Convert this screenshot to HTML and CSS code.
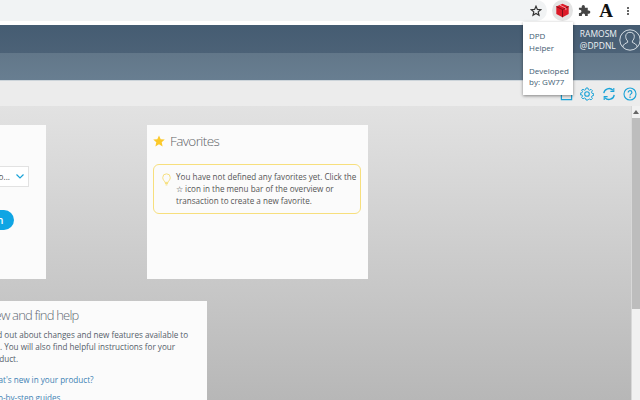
FILE: index.html
```html
<!DOCTYPE html>
<html lang="en">
<head>
<meta charset="utf-8">
<title>DPD Helper</title>
<link rel="stylesheet" href="styles.css">
</head>
<body>
<div class="chrome">
  <div class="omnibox"><svg class="star-o" viewBox="0 0 12 12" width="12" height="12"><path d="M6 1.200l1.400 3.200 3.400.3-2.600 2.200.8 3.400L6 8.500l-3 1.800.8-3.400L1.200 4.700l3.400-.3z" fill="none" stroke="#333" stroke-width="1.200"/></svg></div>
  <span class="ext-active"><svg viewBox="0 0 16 16" width="15" height="15"><path d="M8 .8l6.600 3v7.900L8 15.200 1.400 11.700V3.800z" fill="#dc1a28"/><path d="M1.400 3.800L8 7l6.600-3.200M8 7v8.200" stroke="#7e0d18" stroke-width="1" fill="none"/><path d="M5 2.200l6.600 3.200v2.200" stroke="#f7a0a5" stroke-width="1" fill="none"/></svg></span>
  <svg class="puzzle" viewBox="0 0 14 14" width="13" height="13"><path d="M1 4h3V2.800a1.700 1.700 0 0 1 3.400 0V4h3.100v3h1.100a1.700 1.700 0 0 1 0 3.400h-1.100V13H7.600v-1.100a1.700 1.700 0 0 0-3.400 0V13H1V9.600h1a1.700 1.700 0 0 0 0-3.400H1z" fill="#444"/></svg>
  <span class="serif-a">A</span>
  <span class="kebab"><i></i><i></i><i></i></span>
</div>
<header class="top">
  <div class="user">
    <div class="user-name">RAMOSM<br>@DPDNL</div>
    <svg viewBox="0 0 22 22" width="22" height="22"><circle cx="11" cy="11" r="10.200" fill="none" stroke="#d5dde3" stroke-width="1"/><path d="M3.800 18c.5-3 2.800-3.600 4.800-4.600v-1.500C7.300 10.800 6.700 9 6.700 7.300 6.700 4.800 8.500 3.300 11 3.300s4.300 1.500 4.300 4c0 1.700-.6 3.500-1.900 4.600v1.500c2 1 4.300 1.600 4.800 4.600" fill="none" stroke="#d5dde3" stroke-width="1"/></svg>
  </div>
</header>
<div class="band"></div>
<div class="tools">
  <svg viewBox="0 0 14 14" width="13" height="13"><path d="M1.500 1v11.500h11V4" fill="none" stroke="#1aa3d8" stroke-width="1.300"/></svg>
  <svg viewBox="0 0 14 14" width="14" height="14"><circle cx="7" cy="7" r="2.300" fill="none" stroke="#1aa3d8" stroke-width="1.100"/><path d="M6 1h2l.3 1.600 1.300.6L11 2.300l1.400 1.400-.9 1.400.6 1.300 1.600.3v1.800l-1.600.3-.6 1.300.9 1.400-1.400 1.400-1.400-.9-1.300.6L8 13H6l-.3-1.400-1.300-.6-1.400.9-1.400-1.400.9-1.400-.6-1.300L.3 7.900V6.100l1.600-.3.600-1.300-.9-1.400L3 2.300l1.400.9 1.300-.6z" fill="none" stroke="#1aa3d8" stroke-width="1"/></svg>
  <svg viewBox="0 0 14 14" width="14" height="14"><path d="M1.800 6.200A5.300 5.300 0 0 1 11 3.300M12.200 7.800A5.300 5.300 0 0 1 3 10.700" fill="none" stroke="#1aa3d8" stroke-width="1.300"/><path d="M11.800 1v3.400H8.400M2.200 13V9.600h3.400" fill="none" stroke="#1aa3d8" stroke-width="1.100"/></svg>
  <svg viewBox="0 0 14 14" width="14" height="14"><circle cx="7" cy="7" r="6" fill="none" stroke="#1aa3d8" stroke-width="1.100"/><path d="M5.200 5.400c0-2.300 3.700-2.300 3.700 0 0 1.500-1.900 1.500-1.900 3M7 9.600v1.300" fill="none" stroke="#1aa3d8" stroke-width="1.200"/></svg>
</div>
<div class="view">
  <main class="main">
    <div class="row">
      <section class="card card-search">
        <div class="select"><span class="select-text">Sel. Portfolio...</span><svg viewBox="0 0 8 5" width="8" height="5"><path d="M.5.500L4 4 7.500.500" fill="none" stroke="#1aa3d8" stroke-width="1.200"/></svg></div>
        <button class="btn">Search</button>
      </section>
      <section class="card card-fav">
        <h2 class="fav-title"><svg viewBox="0 0 12 12" width="12" height="12"><path d="M6 .4l1.700 3.800 4.100.4-3.100 2.700.9 4.100L6 9.300l-3.600 2.100.9-4.100L.2 4.600l4.100-.4z" fill="#fbc92b"/></svg>Favorites</h2>
        <div class="note">
          <svg viewBox="0 0 10 14" width="9" height="13"><path d="M3.200 10.200C3 8.500.8 7.500.8 4.900a4.200 4.200 0 0 1 8.400 0c0 2.600-2.200 3.600-2.400 5.300zM3.300 11.500h3.400M4 13h2" fill="none" stroke="#f6dc72" stroke-width="1"/></svg>
          <p>You have not defined any favorites yet. Click the <span class="inline-star">☆</span> icon in the menu bar of the overview or transaction to create a new favorite.</p>
        </div>
      </section>
    </div>
    <section class="card card-help">
      <h2 class="help-title">New and find help</h2>
      <p class="help-text">Find out about changes and new features available to you. You will also find helpful instructions for your product.</p>
      <a class="help-link">What's new in your product?</a>
      <a class="help-link">Step-by-step guides</a>
    </section>
  </main>
  <div class="scroll"><span class="arrow"></span><span class="thumb"></span></div>
</div>
<div class="popup">DPD<br>Helper<br><br>Developed<br>by: GW77</div>
</body>
</html>
```

FILE: styles.css
```css
* { box-sizing: border-box; }
html, body { margin: 0; height: 400px; overflow: hidden; }
body { width: 640px; display: flex; flex-direction: column; font-family: "Open Sans", sans-serif; color: #4c5760; }
.chrome { height: 25px; flex: none; background: #fff; display: flex; align-items: center; padding: 0 11px 4px 0; }
.omnibox { flex: 1; align-self: stretch; background: #f1f3f4; border-radius: 0 11px 11px 0; display: flex; align-items: center; justify-content: flex-end; padding-right: 5px; margin-right: 5px; }
.star-o { display: block; }
.ext-active { width: 21px; height: 21px; border-radius: 50%; background: #e4e4e4; display: flex; align-items: center; justify-content: center; margin-right: 5px; flex: none; }
.puzzle { margin-right: 8px; flex: none; }
.serif-a { font: bold 19px/19px "Liberation Serif", serif; color: #111; width: 14px; margin-right: 14px; text-align: center; }
.kebab { display: flex; flex-direction: column; gap: 1px; width: 2px; }
.kebab i { display: block; width: 2px; height: 2px; background: #333; border-radius: 50%; }
.top { height: 28px; flex: none; background: linear-gradient(#455c72, #4c6277); display: flex; justify-content: flex-end; color: #eef2f5; }
.user { display: flex; align-items: center; gap: 2px; margin-right: -1px; padding-top: 1px; }
.user-name { font-size: 8.500px; line-height: 12px; }
.band { height: 27px; flex: none; background: linear-gradient(#627789, #687e91); }
.tools { height: 26px; flex: none; background: #ececec; border-top: 1px solid #ccd4da; display: flex; align-items: center; justify-content: flex-end; gap: 7.500px; padding: 1px 3px 0 0; }
.view { flex: 1; min-height: 0; display: flex; overflow: hidden; }
.main { flex: 1; min-width: 0; padding: 19px 0 0; background: linear-gradient(#e2e2e2, #b7b7b7); border-right: 1px solid #d8d8d8; }
.row { display: flex; gap: 101px; margin-left: -154px; margin-bottom: 22px; }
.card { background: #fbfbfb; }
.card-search { width: 200px; height: 154px; padding: 41px 17px 0 90px; display: flex; flex-direction: column; align-items: flex-end; gap: 23px; }
.select { width: 100%; height: 21px; background: #fff; border: 1px solid #e2e2e2; display: flex; align-items: center; justify-content: flex-end; gap: 6px; padding-right: 4px; font-size: 8.200px; white-space: nowrap; overflow: hidden; flex: none; }
.select-text { color: #555; }
.btn { width: 54px; height: 20px; margin-right: 15px; border: 0; border-radius: 10px; background: #0fa5e4; color: #fff; font: 600 10px "Open Sans", sans-serif; padding: 0; flex: none; }
.card-fav { width: 221px; height: 154px; padding: 8px 7px 0 6px; }
.fav-title { margin: 0 0 15px; font-size: 13.500px; line-height: 16px; font-weight: 300; letter-spacing: -.6px; color: #5f6468; display: flex; align-items: center; gap: 5px; }
.note { display: flex; gap: 5px; height: 50px; border: 1px solid #f7df7d; border-radius: 6px; padding: 6px 2px 0 8px; font-size: 8.100px; line-height: 12px; color: #555; }
.note svg { flex: none; margin-top: 2px; }
.note p { margin: 0; }
.inline-star { color: #333; }
.card-help { width: 361px; height: 130px; margin-left: -154px; padding: 6px 13px 0 140px; }
.help-title { margin: 0 0 5px; font-size: 13px; line-height: 17px; font-weight: 300; letter-spacing: -.8px; color: #5e6872; white-space: nowrap; }
.help-text { margin: 0 0 9px; font-size: 8.150px; line-height: 12px; color: #55606a; }
.help-link { display: block; font-size: 8.150px; line-height: 12px; color: #3e82b4; margin-bottom: 6px; white-space: nowrap; }
.scroll { width: 8px; flex: none; background: #f1f1f1; display: flex; flex-direction: column; align-items: center; }
.arrow { width: 0; height: 0; margin: 4px 0; border: 3px solid transparent; border-top: 0; border-bottom: 4px solid #666; }
.thumb { width: 100%; height: 191px; background: #bdbdbd; }
.popup { position: absolute; left: 523px; top: 22px; width: 50px; height: 73px; background: #fff; box-shadow: 0 1px 3px rgba(0,0,0,.45); padding: 8px 0 0 6px; font-size: 8px; line-height: 11.500px; color: #3f5d73; white-space: nowrap; }
```
